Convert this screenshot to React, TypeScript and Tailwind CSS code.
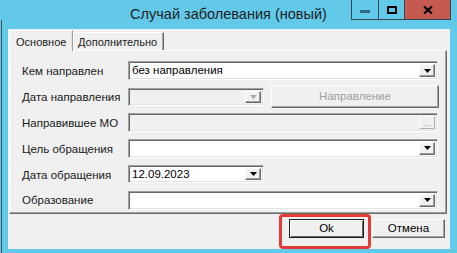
import React from "react";

const font = { fontFamily: '"Liberation Sans", Arial, sans-serif' };

const Arrow = ({ disabled }: { disabled?: boolean }) => (
  <svg width="7" height="4" viewBox="0 0 7 4">
    <path d="M0 0h7L3.5 4z" fill={disabled ? "#a8a8a8" : "#000"} />
  </svg>
);

const DropBtn = ({ disabled }: { disabled?: boolean }) => (
  <div className="w-[16px] h-full flex items-center justify-center bg-[#f0f0f0] border border-t-white border-l-white border-b-[#696969] border-r-[#696969] shadow-[inset_-1px_-1px_0_#a0a0a0]">
    <Arrow disabled={disabled} />
  </div>
);

const Sunken = ({
  children,
  className,
}: {
  children?: React.ReactNode;
  className?: string;
}) => (
  <div
    className={
      "flex items-stretch border border-t-[#a0a0a0] border-l-[#a0a0a0] border-b-white border-r-white shadow-[inset_1px_1px_0_#696969,inset_-1px_-1px_0_#e3e3e3] p-[2px] " +
      (className || "")
    }
  >
    {children}
  </div>
);

const Row = ({
  label,
  children,
}: {
  label: string;
  children: React.ReactNode;
}) => (
  <div className="h-[26px] flex items-center">
    <div className="w-[106px] text-[11.5px] text-[#1a1a1a] pt-[2px]">{label}</div>
    {children}
  </div>
);

export default function App() {
  return (
    <div
      className="w-[457px] h-[253px] bg-[#62c9e9] overflow-hidden relative flex flex-col"
      style={font}
    >
      <div className="absolute left-[1px] top-[20px] w-[1px] h-[233px] bg-[#4a4a5a]" />
      {/* title bar */}
      <div className="h-[29px] relative flex justify-center items-center shrink-0">
        <span className="text-[14.5px] text-[#1e1e1e] pt-[1px]">
          Случай заболевания (новый)
        </span>
        <div className="absolute top-0 left-[351px] flex h-[20px] border border-t-0 border-[#36474f]">
          <div className="w-[27px] flex items-center justify-center border-r border-[#36474f]">
            <div className="w-[10px] h-[3px] bg-[#2c6a86] mt-[4px]" />
          </div>
          <div className="w-[26px] flex items-center justify-center border-r border-[#36474f]">
            <div className="w-[10px] h-[8px] border-2 border-black" />
          </div>
          <div className="w-[45px] bg-[#c75a50] flex items-center justify-center">
            <svg width="10" height="8" viewBox="0 0 10 8">
              <path d="M1 0.5L9 7.5M9 0.5L1 7.5" stroke="#000" strokeWidth="2.2" />
            </svg>
          </div>
        </div>
      </div>

      {/* client area */}
      <div className="ml-[8px] w-[442px] h-[220px] bg-[#f0f0f0] flex flex-col shrink-0 relative">
        {/* tabs */}
        <div className="h-[21px] flex items-end pl-[1px] shrink-0">
          <div className="h-[21px] w-[64px] bg-[#f0f0f0] border border-b-0 border-t-white border-l-white border-r-[#a0a0a0] shadow-[inset_-1px_0_0_#e3e3e3] text-[11px] pl-[6px] pt-[3px] text-[#1a1a1a] relative z-10 mb-[-1px] whitespace-nowrap">
            Основное
          </div>
          <div className="h-[18px] w-[91px] border border-b-0 border-t-white border-l-white border-r-[#696969] shadow-[inset_-1px_0_0_#a0a0a0] text-[11px] pl-[4px] pt-[1px] text-[#1a1a1a] whitespace-nowrap">
            Дополнительно
          </div>
        </div>

        {/* panel */}
        <div className="ml-[1px] w-[438px] h-[164px] border border-t-white border-l-white border-b-[#696969] border-r-[#696969] shadow-[inset_-1px_-1px_0_#a0a0a0] pl-[12px] pt-[7px] flex flex-col shrink-0">
          <Row label="Кем направлен">
            <Sunken className="w-[310px] h-[19px] bg-white">
              <span className="flex-1 text-[11.5px] leading-[13px] pl-[1px] text-black">
                без направления
              </span>
              <DropBtn />
            </Sunken>
          </Row>
          <Row label="Дата направления">
            <Sunken className="w-[136px] h-[18px] bg-[#f0f0f0]">
              <span className="flex-1" />
              <DropBtn disabled />
            </Sunken>
            <div className="ml-[7px] w-[168px] h-[23px] flex items-center justify-center bg-[#f0f0f0] border border-t-white border-l-white border-b-[#696969] border-r-[#696969] shadow-[inset_-1px_-1px_0_#a0a0a0] text-[11.5px] text-[#a0a0a0]">
              Направление
            </div>
          </Row>
          <Row label="Направившее МО">
            <Sunken className="w-[310px] h-[19px] bg-[#f0f0f0]">
              <span className="flex-1" />
              <div className="w-[16px] h-full flex items-end justify-center bg-[#f0f0f0] border border-t-white border-l-white border-b-[#b0b0b0] border-r-[#b0b0b0] text-[9px] leading-[10px] text-[#a8a8a8]">
                ...
              </div>
            </Sunken>
          </Row>
          <Row label="Цель обращения">
            <Sunken className="w-[310px] h-[19px] bg-white">
              <span className="flex-1" />
              <DropBtn />
            </Sunken>
          </Row>
          <Row label="Дата обращения">
            <Sunken className="w-[136px] h-[18px] bg-white">
              <span className="flex-1 text-[11.5px] leading-[13px] pl-[1px] text-black">
                12.09.2023
              </span>
              <DropBtn />
            </Sunken>
          </Row>
          <Row label="Образование">
            <Sunken className="w-[310px] h-[19px] bg-white">
              <span className="flex-1" />
              <DropBtn />
            </Sunken>
          </Row>
        </div>

        {/* buttons */}
        <div className="flex justify-end pr-[5px] pt-[5px] gap-[8px]">
          <div className="w-[75px] h-[19px] flex items-center justify-center border border-[#1e1e1e] shadow-[inset_1px_1px_0_#fff,inset_-1px_-1px_0_#696969] text-[11.5px] text-black bg-[#f0f0f0]">
            Ok
          </div>
          <div className="w-[73px] h-[19px] flex items-center justify-center border border-t-white border-l-white border-b-[#696969] border-r-[#696969] shadow-[inset_-1px_-1px_0_#a0a0a0] text-[11.5px] text-black bg-[#f0f0f0]">
            Отмена
          </div>
        </div>

        <div className="absolute left-[271px] top-[185px] w-[92px] h-[35px] rounded-[4px] border-[3px] border-[#e53a35]" />
      </div>
    </div>
  );
}
